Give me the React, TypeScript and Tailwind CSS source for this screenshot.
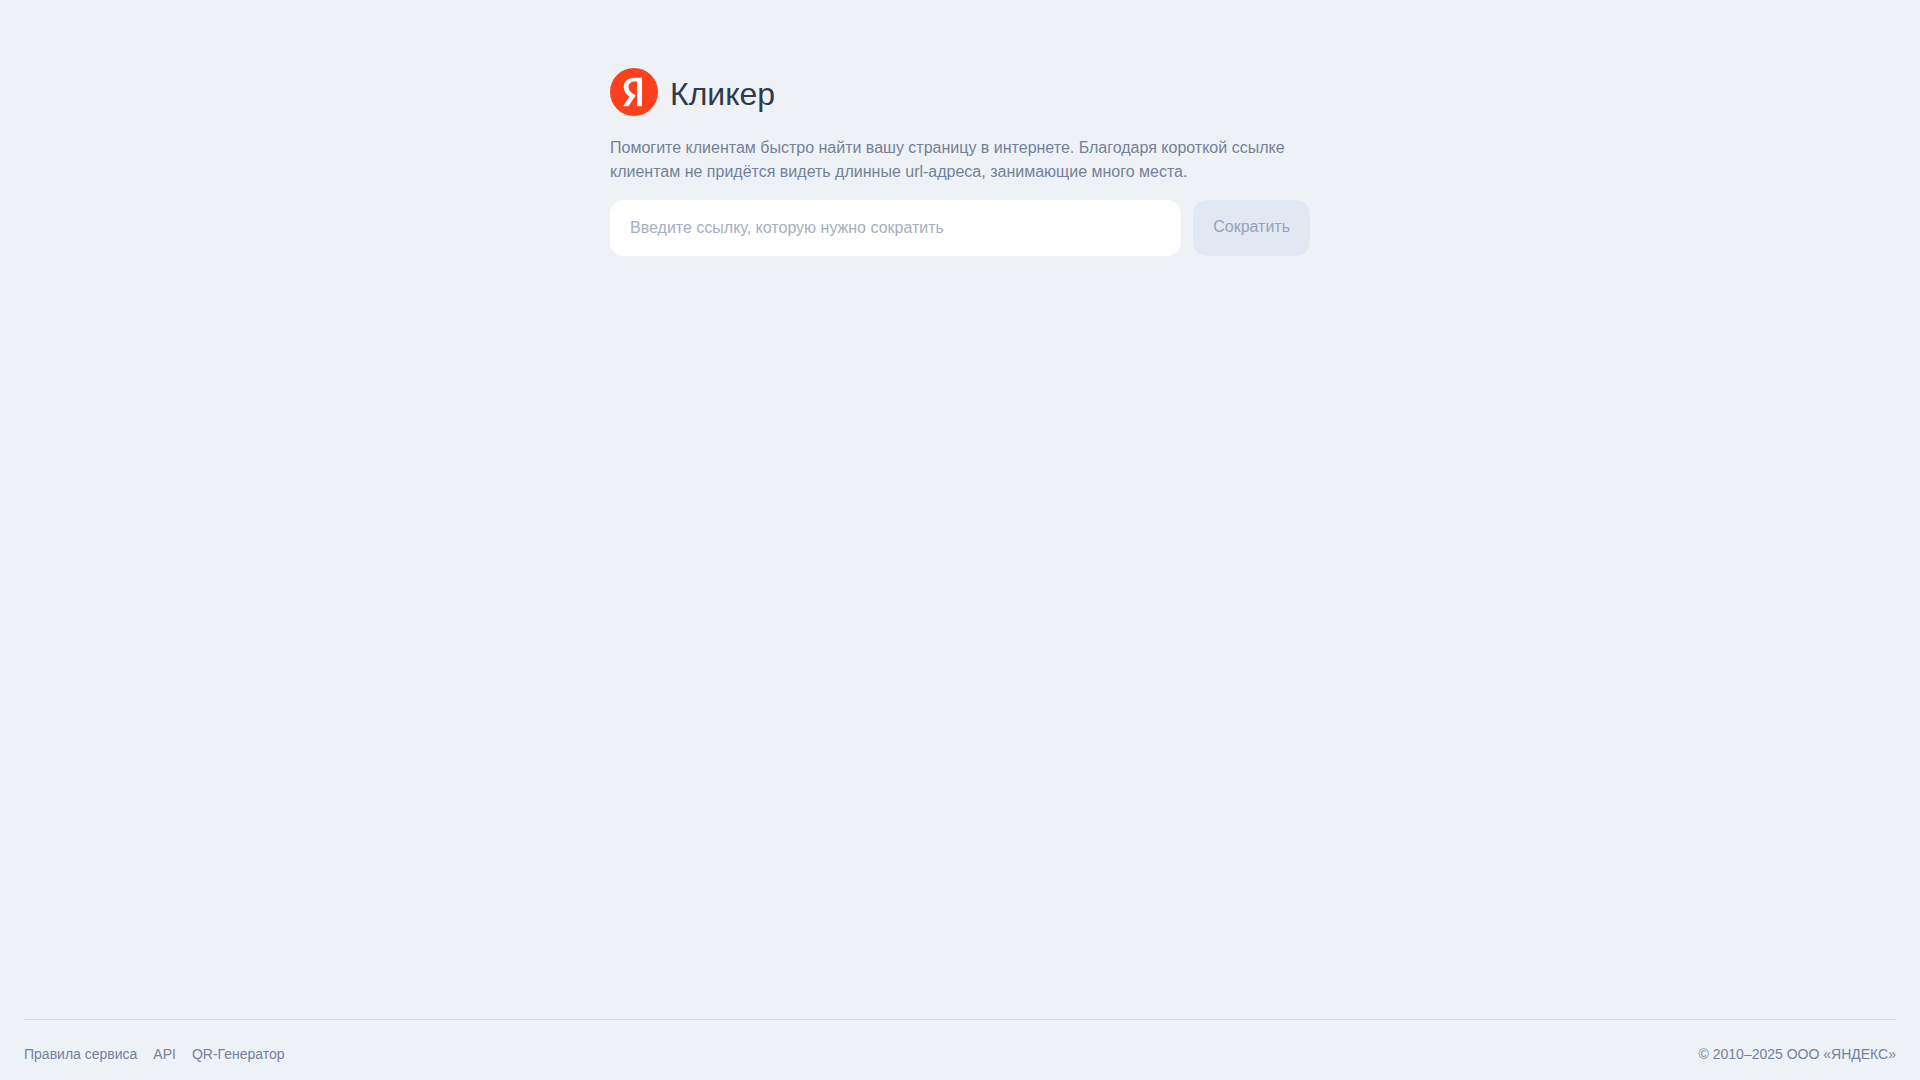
import { useState } from 'react'

const links = [
  { label: 'Правила сервиса', href: '#rules' },
  { label: 'API', href: '#api' },
  { label: 'QR-Генератор', href: '#qr' },
]

const Logo = () => (
  <svg viewBox="2.04 2 20 20" className="size-12 shrink-0" aria-hidden="true">
    <circle cx="12.04" cy="12" r="10" fill="#fc3f1d" />
    <path
      fill="#fff"
      d="M13.32 7.666h-.924c-1.694 0-2.585.858-2.585 2.123 0 1.43.616 2.1 1.881 2.959l1.045.704-3.003 4.487H7.49l2.695-4.014c-1.55-1.111-2.42-2.19-2.42-4.015 0-2.288 1.595-3.85 4.62-3.85h3.003v11.868H13.32V7.666z"
    />
  </svg>
)

const App = () => {
  const [url, setUrl] = useState('')

  return (
    <div className="flex min-h-screen flex-col bg-[#eef2f7] px-6 font-['Liberation_Sans',Arial,sans-serif] text-[#758099]">
      <main className="mx-auto w-full max-w-[700px] grow pt-[68px]">
        <div className="flex items-center gap-3">
          <Logo />
          <h1 className="pt-1 text-[32px] leading-10 text-[#313a4c]">Кликер</h1>
        </div>
        <p className="mt-5 text-base">
          Помогите клиентам быстро найти вашу страницу в интернете. Благодаря
          короткой ссылке клиентам не придётся видеть длинные url-адреса,
          занимающие много места.
        </p>
        <form
          onSubmit={(e) => e.preventDefault()}
          className="mt-4 flex gap-3"
        >
          <input
            type="text"
            aria-label="Ссылка"
            value={url}
            onChange={(e) => setUrl(e.target.value)}
            placeholder="Введите ссылку, которую нужно сократить"
            className="h-14 min-w-0 grow rounded-[14px] bg-white px-5 text-base text-[#313a4c] outline-none placeholder:text-[#a4aec2]"
          />
          <button
            type="submit"
            disabled={!url}
            className="h-14 rounded-[14px] bg-[#e1e8f2] px-5 pb-0.5 text-base text-[#98a1ba]"
          >
            Сократить
          </button>
        </form>
      </main>

      <footer className="flex justify-between border-t border-[#d8dce4] pt-6 pb-4 text-sm">
        <nav className="flex gap-4">
          {links.map(({ label, href }) => (
            <a key={href} href={href}>
              {label}
            </a>
          ))}
        </nav>
        <span>© 2010–2025 ООО «ЯНДЕКС»</span>
      </footer>
    </div>
  )
}

export default App
